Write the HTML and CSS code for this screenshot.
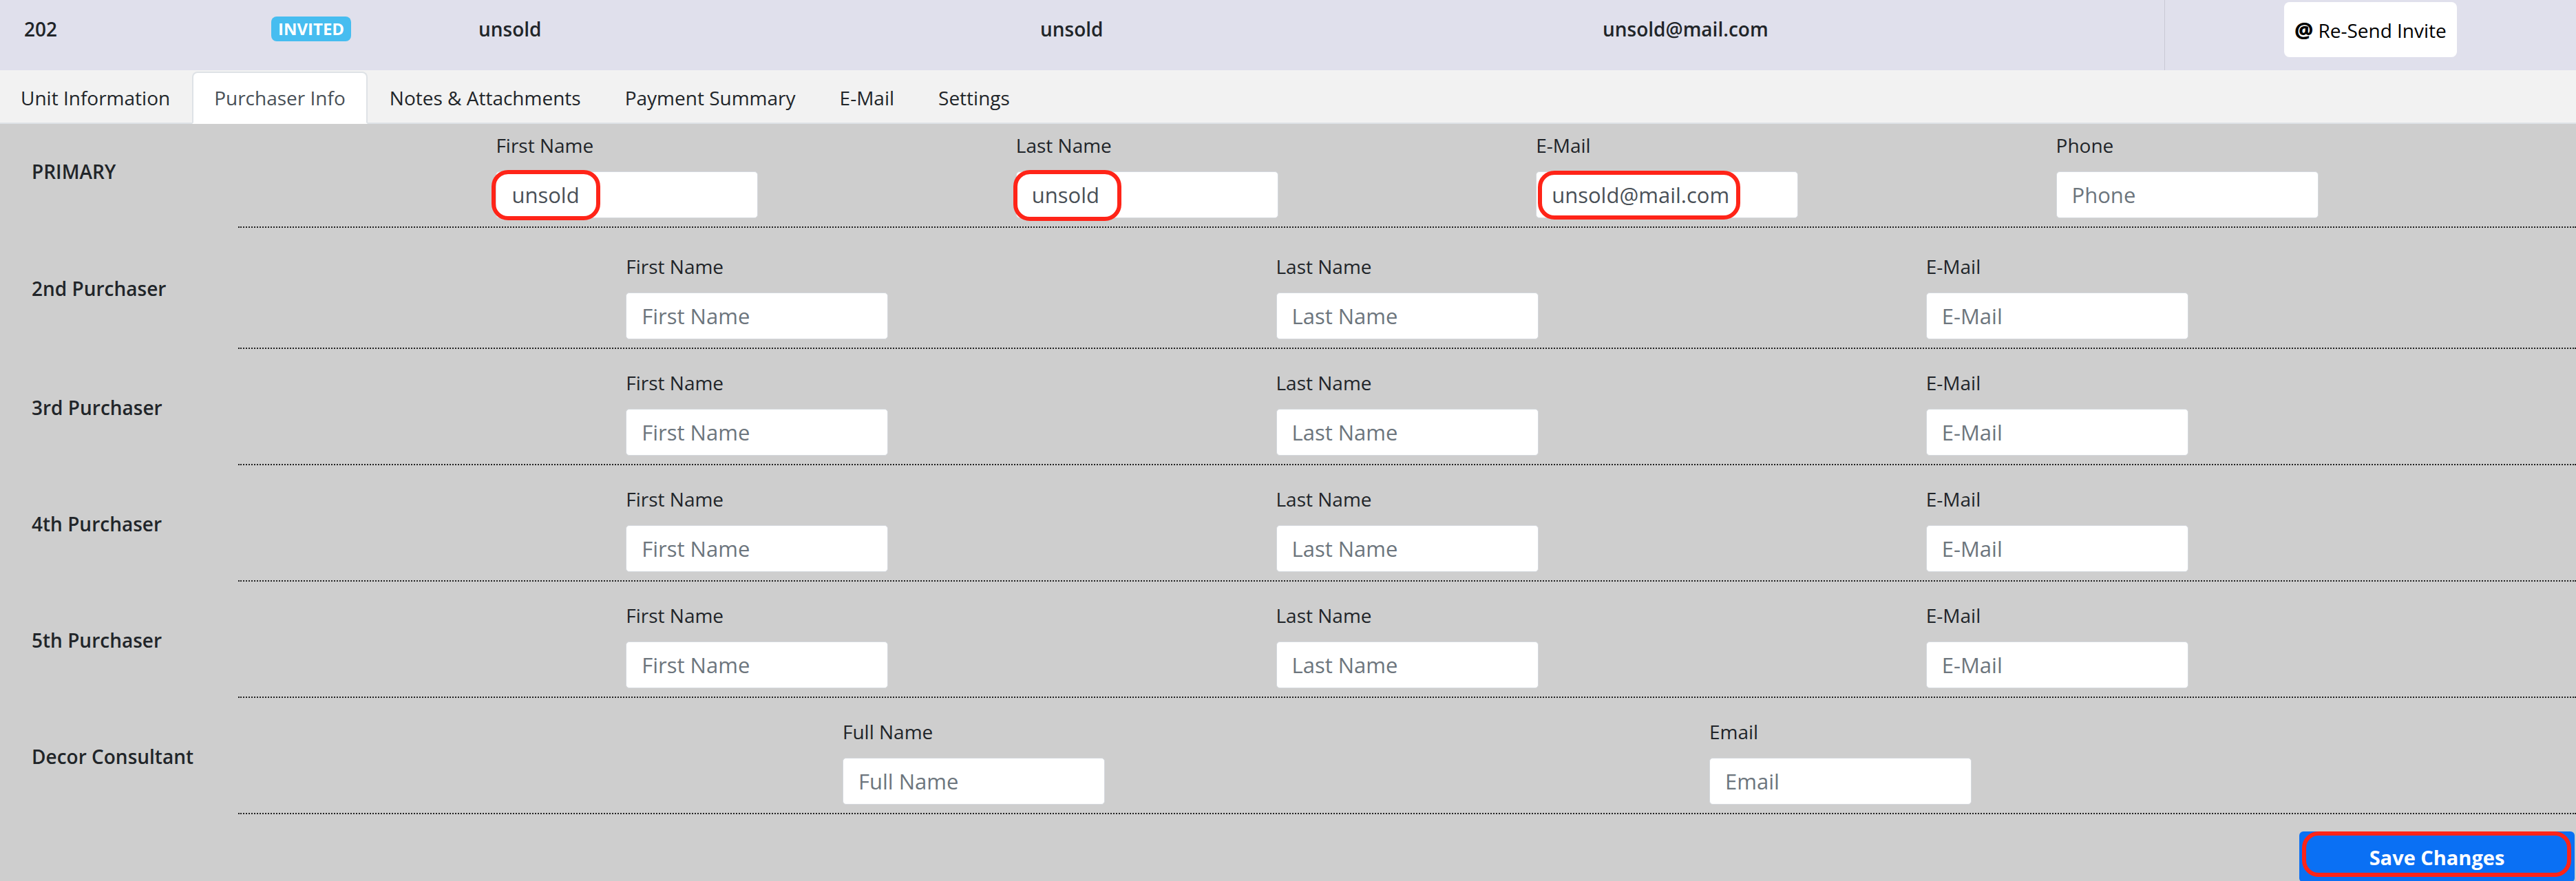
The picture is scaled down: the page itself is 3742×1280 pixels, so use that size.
FILE: index.html
```html
<!DOCTYPE html>
<html lang="en">
<head>
    <meta charset="UTF-8">
    <meta name="viewport" content="width=device-width, initial-scale=1.0">
    <title>Unit 202 - Purchaser Info</title>
    <link rel="stylesheet" href="styles.css">
</head>
<body>
    <!-- Unit summary bar -->
    <div class="unit-bar">
        <div class="cell">202</div>
        <div class="cell"><span class="badge">INVITED</span></div>
        <div class="cell">unsold</div>
        <div class="cell">unsold</div>
        <div class="cell">unsold@mail.com</div>
        <div class="cell cell-action">
            <button class="resend-btn"><b class="at">@</b> Re-Send Invite</button>
        </div>
    </div>

    <!-- Tabs -->
    <ul class="tabs">
        <li class="tab">Unit Information</li>
        <li class="tab active">Purchaser Info</li>
        <li class="tab">Notes &amp; Attachments</li>
        <li class="tab">Payment Summary</li>
        <li class="tab">E-Mail</li>
        <li class="tab">Settings</li>
    </ul>

    <div class="panel">
        <div class="row row-primary">
            <div class="row-label">PRIMARY</div>
            <div class="row-fields">
                <div class="field">
                    <label>First Name</label>
                    <div class="input-wrap">
                        <input type="text" value="unsold" placeholder="First Name">
                        <span class="ring ring-first"></span>
                    </div>
                </div>
                <div class="field">
                    <label>Last Name</label>
                    <div class="input-wrap">
                        <input type="text" value="unsold" placeholder="Last Name">
                        <span class="ring ring-last"></span>
                    </div>
                </div>
                <div class="field">
                    <label>E-Mail</label>
                    <div class="input-wrap">
                        <input type="text" value="unsold@mail.com" placeholder="E-Mail">
                        <span class="ring ring-email"></span>
                    </div>
                </div>
                <div class="field">
                    <label>Phone</label>
                    <input type="text" placeholder="Phone">
                </div>
            </div>
        </div>

        <div class="row row-second">
            <div class="row-label">2nd Purchaser</div>
            <div class="row-fields">
                <div class="field"><label>First Name</label><input type="text" placeholder="First Name"></div>
                <div class="field"><label>Last Name</label><input type="text" placeholder="Last Name"></div>
                <div class="field"><label>E-Mail</label><input type="text" placeholder="E-Mail"></div>
            </div>
        </div>

        <div class="row">
            <div class="row-label">3rd Purchaser</div>
            <div class="row-fields">
                <div class="field"><label>First Name</label><input type="text" placeholder="First Name"></div>
                <div class="field"><label>Last Name</label><input type="text" placeholder="Last Name"></div>
                <div class="field"><label>E-Mail</label><input type="text" placeholder="E-Mail"></div>
            </div>
        </div>

        <div class="row">
            <div class="row-label">4th Purchaser</div>
            <div class="row-fields">
                <div class="field"><label>First Name</label><input type="text" placeholder="First Name"></div>
                <div class="field"><label>Last Name</label><input type="text" placeholder="Last Name"></div>
                <div class="field"><label>E-Mail</label><input type="text" placeholder="E-Mail"></div>
            </div>
        </div>

        <div class="row">
            <div class="row-label">5th Purchaser</div>
            <div class="row-fields">
                <div class="field"><label>First Name</label><input type="text" placeholder="First Name"></div>
                <div class="field"><label>Last Name</label><input type="text" placeholder="Last Name"></div>
                <div class="field"><label>E-Mail</label><input type="text" placeholder="E-Mail"></div>
            </div>
        </div>

        <div class="row">
            <div class="row-label">Decor Consultant</div>
            <div class="row-fields">
                <div class="field"><label>Full Name</label><input type="text" placeholder="Full Name"></div>
                <div class="field"><label>Email</label><input type="text" placeholder="Email"></div>
            </div>
        </div>

        <div class="actions">
            <button class="save-btn">Save Changes<span class="ring ring-save"></span></button>
        </div>
    </div>
</body>
</html>
```

FILE: styles.css
```css
body, html {
    margin: 0;
    padding: 0;
}

body {
    font-family: "Open Sans", "Liberation Sans", sans-serif;
    font-size: 28px;
    line-height: 42px;
    color: #212529;
    background: #cecece;
}

/* Top summary bar */
.unit-bar {
    display: grid;
    grid-template-columns: 359px 301px 816px 817px 851px 1fr;
    height: 102px;
    background: #e0e0ec;
    font-weight: 600;
}

.unit-bar .cell {
    display: flex;
    align-items: center;
    padding: 0 0 18px 35px;
}

.unit-bar .cell-action {
    justify-content: center;
    padding: 0 0 16px;
    border-left: 1px solid #c9c9d5;
}

.badge {
    display: inline-block;
    height: 36px;
    line-height: 36px;
    padding: 0 10px;
    font-size: 24px;
    font-weight: 700;
    color: #fff;
    background: #46bdf0;
    border-radius: 8px;
}

.resend-btn {
    width: 251px;
    height: 80px;
    border: none;
    border-radius: 8px;
    background: #fff;
    color: #000;
    font-family: inherit;
    font-size: 28px;
    text-align: center;
    cursor: pointer;
}

.resend-btn .at {
    font-size: 30px;
    font-weight: 800;
}

/* Tabs */
.tabs {
    display: flex;
    list-style: none;
    margin: 0;
    padding: 2px 0 0;
    background: #f2f2f2;
    border-bottom: 2px solid #dee2e6;
}

.tab {
    padding: 15px 30px;
    margin-bottom: -2px;
    border: 2px solid transparent;
    border-radius: 8px 8px 0 0;
    cursor: pointer;
}

.tab:first-child {
    padding-left: 28px;
}

.tab.active {
    background: #fff;
    color: #495057;
    border-color: #dee2e6 #dee2e6 #fff;
}

/* Purchaser rows */
.row {
    display: flex;
}

.row-label {
    width: 300px;
    padding-left: 46px;
    display: flex;
    align-items: center;
    font-weight: 600;
}

.row-primary .row-label {
    padding-bottom: 14px;
}

.row-fields {
    flex: 1;
    display: flex;
    justify-content: space-evenly;
    padding: 28px 0 12px;
    border-bottom: 2px dotted #222;
}

.row-primary .row-fields {
    padding-top: 10px;
}

.row-second .row-fields {
    padding-top: 35px;
}

.field {
    width: 381px;
}

.field label {
    display: block;
    margin-bottom: 17px;
}

.input-wrap {
    position: relative;
}

.field input {
    display: block;
    width: 100%;
    height: 68px;
    box-sizing: border-box;
    padding: 0 22px;
    border: 1px solid #d4d8dd;
    border-radius: 5px;
    background: #fff;
    font-family: inherit;
    font-size: 31px;
    color: #495057;
}

.field input::placeholder {
    color: #6c757d;
}

/* red highlight rings */
.ring {
    position: absolute;
    border: 6px solid #ff2418;
    border-radius: 24px;
    box-sizing: border-box;
    pointer-events: none;
}

.ring-first {
    left: -6px;
    top: -2px;
    width: 158px;
    height: 73px;
}

.ring-last {
    left: -4px;
    top: -2px;
    width: 157px;
    height: 74px;
}

.ring-email {
    left: 3px;
    top: -1px;
    width: 294px;
    height: 71px;
}

.ring-save {
    left: 4px;
    top: 0;
    width: 391px;
    height: 66px;
}

.actions {
    display: flex;
    justify-content: flex-end;
    padding: 25px 2px 0 0;
}

.save-btn {
    position: relative;
    width: 400px;
    height: 74px;
    border: none;
    border-radius: 6px;
    background: #0a70f4;
    color: #fff;
    font-family: inherit;
    font-size: 29px;
    font-weight: 700;
    cursor: pointer;
}
```
